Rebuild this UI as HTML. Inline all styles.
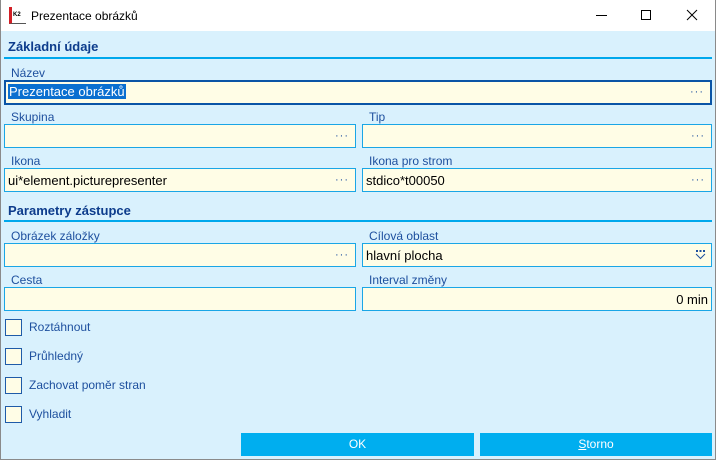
<!DOCTYPE html>
<html><head><meta charset="utf-8"><style>
*{box-sizing:border-box;margin:0;padding:0}
body{width:716px;height:460px;overflow:hidden;background:#d9f1fd;font-family:"Liberation Sans",sans-serif;position:relative}
#win{position:absolute;left:0;top:0;width:716px;height:460px;border:1px solid #8a8a8a;border-top:none}
.a{position:absolute}
.title{left:0;top:0;width:716px;height:31px;background:#fff}
.hdr{font-weight:bold;font-size:13px;color:#0d3c8c}
.line{height:2px;background:#00a8ec;left:4px;width:708px}
.lbl{font-size:12px;color:#1d4f9e}
.f{background:#fffde6;border:1px solid #1aa6e6;font-size:13px;color:#000;padding:4px 0 0 3px;height:24px}
.dots{position:absolute;right:6px;top:5px;font-size:11px;color:#1d4f9e;letter-spacing:1px}
.cb{width:17px;height:17px;border:1.5px solid #1f5ba8;background:#fffde6;left:5px}
.cbl{left:29px;font-size:12px;color:#1d4f9e}
.btn{background:#00aeef;color:#fff;font-size:12px;text-align:center;height:23px;line-height:23px;top:433px}
</style></head><body>
<div class="a title"></div>
<div class="a" style="left:9px;top:7px;width:17px;height:17px;background:#fff;border-left:3px solid #d21f26;border-bottom:1px solid #555"><div style="position:absolute;left:1px;top:5px;font-size:6px;font-weight:bold;color:#000">K2</div></div>
<div class="a" style="left:31px;top:9px;font-size:12px;color:#000">Prezentace obrázků</div>
<div class="a" style="left:596px;top:15px;width:11px;height:1px;background:#000"></div>
<div class="a" style="left:641px;top:10px;width:10px;height:10px;border:1px solid #000"></div>
<svg class="a" style="left:686px;top:9px" width="12" height="12"><path d="M1 1L11 11M11 1L1 11" stroke="#000" stroke-width="1"/></svg>
<div id="win"></div>

<div class="a hdr" style="left:8px;top:39px">Základní údaje</div>
<div class="a line" style="top:57px"></div>
<div class="a lbl" style="left:11px;top:66px">Název</div>
<div class="a f" style="left:4px;top:80px;width:708px;height:25px;border:2px solid #0a54a6;padding:2px 0 0 2px"><span style="background:#0a6fd0;color:#fff;padding:0 1px">Prezentace obrázků</span><span class="dots" style="top:4px">···</span></div>

<div class="a lbl" style="left:11px;top:110px">Skupina</div>
<div class="a f" style="left:4px;top:124px;width:352px"><span class="dots">···</span></div>
<div class="a lbl" style="left:369px;top:110px">Tip</div>
<div class="a f" style="left:362px;top:124px;width:350px"><span class="dots">···</span></div>

<div class="a lbl" style="left:11px;top:154px">Ikona</div>
<div class="a f" style="left:4px;top:168px;width:352px">ui*element.picturepresenter<span class="dots">···</span></div>
<div class="a lbl" style="left:369px;top:154px">Ikona pro strom</div>
<div class="a f" style="left:362px;top:168px;width:350px">stdico*t00050<span class="dots">···</span></div>

<div class="a hdr" style="left:8px;top:203px">Parametry zástupce</div>
<div class="a line" style="top:220px"></div>

<div class="a lbl" style="left:11px;top:229px">Obrázek záložky</div>
<div class="a f" style="left:4px;top:243px;width:352px"><span class="dots">···</span></div>
<div class="a lbl" style="left:369px;top:229px">Cílová oblast</div>
<div class="a f" style="left:362px;top:243px;width:350px">hlavní plocha
<svg class="a" style="right:5px;top:5px" width="11" height="11"><path d="M1 1h2v2h-2zM4.5 1h2v2h-2zM8 1h2v2h-2z" fill="#1d4f9e"/><path d="M1 5L5.5 9.5L10 5" fill="none" stroke="#1d4f9e"/></svg></div>

<div class="a lbl" style="left:11px;top:273px">Cesta</div>
<div class="a f" style="left:4px;top:287px;width:352px"></div>
<div class="a lbl" style="left:369px;top:273px">Interval změny</div>
<div class="a f" style="left:362px;top:287px;width:350px;text-align:right;padding-right:3px">0 min</div>

<div class="a cb" style="top:319px"></div><div class="a cbl" style="top:320px">Roztáhnout</div>
<div class="a cb" style="top:348px"></div><div class="a cbl" style="top:349px">Průhledný</div>
<div class="a cb" style="top:377px"></div><div class="a cbl" style="top:378px">Zachovat poměr stran</div>
<div class="a cb" style="top:406px"></div><div class="a cbl" style="top:407px">Vyhladit</div>

<div class="a btn" style="left:241px;width:233px">OK</div>
<div class="a btn" style="left:480px;width:232px"><u>S</u>torno</div>
</body></html>
